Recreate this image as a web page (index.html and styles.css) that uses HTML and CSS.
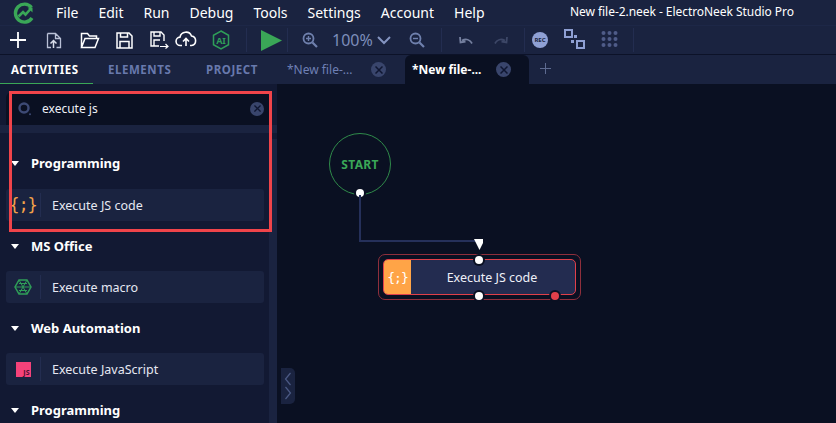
FILE: index.html
```html
<!DOCTYPE html>
<html lang="en">
<head>
<meta charset="utf-8">
<title>ElectroNeek Studio Pro</title>
<link rel="stylesheet" href="styles.css">
</head>
<body>
<header class="menubar">
  <svg class="logo" width="22" height="22" viewBox="0 0 22 22"><path d="M18.5 5.5A9 9 0 1 0 19 16" fill="none" stroke="#3aa757" stroke-width="3.4"/><path d="M5.5 14.5 10 10l2.5 2.500 5-5.500" fill="none" stroke="#3aa757" stroke-width="2.600"/><path d="M14.500 5.500h5v5z" fill="#3aa757"/></svg>
  <nav class="menu"><span>File</span><span>Edit</span><span>Run</span><span>Debug</span><span>Tools</span><span>Settings</span><span>Account</span><span>Help</span></nav>
  <div class="wintitle">New file-2.neek - ElectroNeek Studio Pro</div>
</header>
<div class="toolbar">
  <svg class="t-new" width="18" height="18" viewBox="0 0 18 18"><path d="M9 1v16M1 9h16" stroke="#fff" stroke-width="1.800"/></svg>
  <svg class="t-import" width="16" height="18" viewBox="0 0 16 18"><path d="M1.500 2.500h8l5 5v9h-4M5 16.500H1.500v-14M9.500 2.500v5h5" fill="none" stroke="#b9c0d6" stroke-width="1.300"/><path d="M7.500 17v-7M4.500 12.500l3-3 3 3" fill="none" stroke="#d9ddea" stroke-width="1.500"/></svg>
  <svg class="t-open" width="20" height="17" viewBox="0 0 20 17"><path d="M1.500 15.500v-14h6l2 2.500h7v2.500M1.500 15.500h13.500l3.500-9H5z" fill="none" stroke="#fff" stroke-width="1.500"/></svg>
  <svg class="t-save" width="17" height="17" viewBox="0 0 17 17"><path d="M1 1h12l3 3v12H1zM4.500 1v4h7V1M4 16v-6.500h9V16" fill="none" stroke="#fff" stroke-width="1.500"/></svg>
  <svg class="t-saveas" width="19" height="18" viewBox="0 0 19 18"><path d="M9 15H1V1h10l3 3v6M4 1v4h6V1M4 15V9h6" fill="none" stroke="#fff" stroke-width="1.400"/><path d="M10 15.500h8M15.500 13l2.500 2.500-2.500 2" fill="none" stroke="#fff" stroke-width="1.200"/></svg>
  <svg class="t-cloud" width="22" height="17" viewBox="0 0 22 17"><path d="M7 15.500H5.500a4.200 4.200 0 0 1-.5-8.400A6 6 0 0 1 16.500 6a4.800 4.800 0 0 1 0 9.500H15" fill="none" stroke="#fff" stroke-width="1.600"/><path d="M11 16V9M8 11.500l3-3 3 3" fill="none" stroke="#fff" stroke-width="1.600"/></svg>
  <svg class="t-ai" width="18" height="20" viewBox="0 0 18 20"><path d="M9 1l7.500 4.300v9.400L9 19l-7.500-4.300V5.300z" fill="none" stroke="#2f9e58" stroke-width="1.500"/><text x="9" y="13.500" text-anchor="middle" class="ai-text">AI</text></svg>
  <i class="sep s1"></i>
  <svg class="t-play" width="21" height="21" viewBox="0 0 21 21"><path d="M0 0l21 10.500L0 21z" fill="#3aa757"/></svg>
  <i class="sep s2"></i>
  <svg class="t-zin" width="16" height="16" viewBox="0 0 16 16"><circle cx="6.500" cy="6.500" r="5" fill="none" stroke="#6f80ad" stroke-width="1.800"/><path d="M10.500 10.500 15 15" stroke="#6f80ad" stroke-width="2.200"/><path d="M4 6.500h5M6.500 4v5" stroke="#6f80ad" stroke-width="1.400"/></svg>
  <span class="zoomval">100%</span>
  <svg class="t-chev" width="14" height="9" viewBox="0 0 14 9"><path d="M1 1l6 6 6-6" fill="none" stroke="#8494c0" stroke-width="2"/></svg>
  <svg class="t-zout" width="16" height="16" viewBox="0 0 16 16"><circle cx="6.500" cy="6.500" r="5" fill="none" stroke="#6f80ad" stroke-width="1.800"/><path d="M10.500 10.500 15 15" stroke="#6f80ad" stroke-width="2.200"/><path d="M4 6.500h5" stroke="#6f80ad" stroke-width="1.400"/></svg>
  <i class="sep s3"></i>
  <svg class="t-undo" width="14" height="8" viewBox="0 0 14 8"><path d="M13 7.500C11 3.500 7 2.500 3 4.500M1 1l.5 5.500 5-1" fill="none" stroke="#75809f" stroke-width="1.800"/></svg>
  <svg class="t-redo" width="14" height="8" viewBox="0 0 14 8"><path d="M1 7.500C3 3.500 7 2.500 11 4.500M13 1l-.5 5.500-5-1" fill="none" stroke="#3d4767" stroke-width="1.800"/></svg>
  <i class="sep s4"></i>
  <span class="rec">REC</span>
  <svg class="t-group" width="21" height="20" viewBox="0 0 21 20"><g fill="none" stroke="#8fa0d4" stroke-width="2"><rect x="1" y="1" width="7" height="7"/><rect x="13" y="12" width="7" height="7"/></g><path d="M10 6h3v3h-3zM7 11h3v3H7z" fill="#8fa0d4"/></svg>
  <svg class="t-grid" width="17" height="16" viewBox="0 0 17 16"><g fill="#4f5c88"><circle cx="2.500" cy="2" r="2"/><circle cx="8.500" cy="2" r="2"/><circle cx="14.500" cy="2" r="2"/><circle cx="2.500" cy="8" r="2"/><circle cx="8.500" cy="8" r="2"/><circle cx="14.500" cy="8" r="2"/><circle cx="2.500" cy="14" r="2"/><circle cx="8.500" cy="14" r="2"/><circle cx="14.500" cy="14" r="2"/></g></svg>
  <i class="sep s5"></i>
</div>
<div class="tabbar">
  <div class="sidetabs"><span class="stab active">ACTIVITIES</span><span class="stab">ELEMENTS</span><span class="stab">PROJECT</span></div>
  <div class="ftab"><span>*New file-...</span><b class="xbtn"><svg width="8" height="8" viewBox="0 0 8 8"><path d="M.5.5l7 7M7.500.5l-7 7" stroke="#0f1631" stroke-width="1.500"/></svg></b></div>
  <div class="ftab current"><span>*New file-...</span><b class="xbtn"><svg width="8" height="8" viewBox="0 0 8 8"><path d="M.5.5l7 7M7.500.5l-7 7" stroke="#0f1631" stroke-width="1.500"/></svg></b></div>
  <svg class="plus" width="11" height="11" viewBox="0 0 11 11"><path d="M5.500 0v11M0 5.500h11" stroke="#5d6a90" stroke-width="1"/></svg>
</div>
<main class="workspace">
  <aside class="sidebar">
    <div class="search">
      <svg width="14" height="14" viewBox="0 0 14 14"><circle cx="6" cy="6" r="4.500" fill="none" stroke="#3d4a75" stroke-width="2.400"/><circle cx="12" cy="12.200" r="1" fill="#3d4a75"/></svg>
      <span class="query">execute js</span>
      <b class="xbtn small"><svg width="7" height="7" viewBox="0 0 8 8"><path d="M.5.500l7 7M7.500.500l-7 7" stroke="#0f1631" stroke-width="1.500"/></svg></b>
    </div>
    <div class="strip"></div>
    <div class="list">
      <div class="head first"><i class="caret"></i>Programming</div>
      <div class="row"><span class="ico braces">{;}</span><span class="lbl">Execute JS code</span></div>
      <div class="head"><i class="caret"></i>MS Office</div>
      <div class="row"><span class="ico"><svg width="18" height="16" viewBox="0 0 18 16"><path d="M5 1h8l4 7-4 7H5L1 8z" fill="none" stroke="#2f9e58" stroke-width="1.500"/><path d="M5 1l4 7-4 7M13 1 9 8l4 7M1 8h16M5 4.500h8M5 11.500h8" fill="none" stroke="#2f9e58" stroke-width="1"/></svg></span><span class="lbl">Execute macro</span></div>
      <div class="head"><i class="caret"></i>Web Automation</div>
      <div class="row"><span class="ico"><span class="jsbadge">JS</span></span><span class="lbl">Execute JavaScript</span></div>
      <div class="head"><i class="caret"></i>Programming</div>
    </div>
    <div class="scrolltrack"></div>
    <div class="highlight"></div>
  </aside>
  <section class="canvas">
    <button class="collapse"><svg width="8" height="28" viewBox="0 0 8 28"><path d="M6.500 1 1.500 7l5 6M1.500 15l5 6-5 6" fill="none" stroke="#4c5a85" stroke-width="1.200"/></svg></button>
    <div class="start">START</div>
    <i class="dot start-dot"></i>
    <svg class="wire" width="124" height="55" viewBox="0 0 124 55"><path d="M1 0v46h121" fill="none" stroke="#25305a" stroke-width="2"/><path d="M115 44h11l-5.500 11z" fill="#fff"/></svg>
    <div class="node-outer">
      <div class="node">
        <span class="node-ico">{;}</span>
        <span class="node-lbl">Execute JS code</span>
      </div>
      <i class="port p-top"></i><i class="port p-bot"></i><i class="port p-err"></i>
    </div>
  </section>
</main>
</body>
</html>
```
FILE: styles.css
```css
* { box-sizing: border-box; }
html, body { margin: 0; height: 100%; overflow: hidden; }
body { width: 836px; height: 423px; background: #0a1022; color: #fff; font-family: "Noto Sans", sans-serif; display: flex; flex-direction: column; }

.menubar { height: 25px; background: #1a2340; display: flex; align-items: center; position: relative; flex: none; }
.logo { margin-left: 13px; }
.menu { display: flex; margin-left: 21px; font-size: 14px; line-height: 25px; color: #fff; }
.menu span { margin-right: 20px; }
.menu span:nth-child(2) { margin-right: 20px; }
.wintitle { position: absolute; left: 570px; top: 3px; font-size: 12px; line-height: 17px; letter-spacing: -0.05px; }

.toolbar { height: 30px; background: #1a2340; border-bottom: 1px solid #0c1228; border-top: 1px solid #1d2747; display: flex; align-items: center; flex: none; }
.toolbar svg { flex: none; }
.t-new { margin-left: 9px; }
.t-import { margin-left: 19px; }
.t-open { margin-left: 18px; }
.t-save { margin-left: 16px; }
.t-saveas { margin-left: 17px; }
.t-cloud { margin-left: 6px; margin-top: -3px; }
.t-ai { margin-left: 15px; }
.ai-text { font: 700 9px "Noto Sans", sans-serif; fill: #2f9e58; }
.sep { display: block; width: 1px; height: 24px; background: #232d50; flex: none; }
.s1 { margin-left: 16px; }
.t-play { margin-left: 14px; }
.s2 { margin-left: 5px; }
.t-zin { margin-left: 14px; }
.zoomval { margin-left: 14px; font-size: 16px; color: #7d8dba; line-height: 20px; width: 45px; }
.t-chev { margin-left: 0; }
.t-zout { margin-left: 18px; }
.s3 { margin-left: 16px; }
.t-undo { margin-left: 17px; }
.t-redo { margin-left: 21px; }
.s4 { margin-left: 16px; }
.rec { margin-left: 7px; width: 16px; height: 16px; border-radius: 50%; background: #8fa0d4; color: #1a2340; font-size: 6px; font-weight: 700; line-height: 16px; text-align: center; flex: none; }
.t-group { margin-left: 16px; margin-top: -3px; }
.t-grid { margin-left: 16px; margin-top: -3px; }
.s5 { margin-left: 15px; }

.tabbar { height: 29px; background: #1a2340; display: flex; align-items: stretch; flex: none; }
.sidetabs { width: 280px; display: flex; flex: none; }
.stab { font-size: 11.500px; font-weight: 700; letter-spacing: .55px; line-height: 30px; color: #6879ad; }
.stab:nth-child(1) { width: 93px; padding-left: 11px; color: #fff; border-bottom: 1px solid #3aa757; }
.stab:nth-child(2) { width: 98px; padding-left: 15px; }
.stab:nth-child(3) { padding-left: 15px; }
.ftab { width: 124px; display: flex; align-items: center; font-size: 12px; color: #6f80b5; padding-left: 7px; position: relative; }
.ftab span { width: 84px; white-space: nowrap; }
.ftab.current { width: 124px; margin-left: 1px; background: #0a1022; border-radius: 6px 6px 0 0; color: #fff; font-weight: 700; }
.xbtn { width: 15px; height: 15px; border-radius: 50%; background: #39456c; display: flex; align-items: center; justify-content: center; flex: none; }
.xbtn.small { width: 14px; height: 14px; }
.plus { margin: 8px 0 0 11px; }

.workspace { flex: 1; display: flex; min-height: 0; }
.sidebar { width: 277px; background: #121933; position: relative; overflow: hidden; flex: none; }
.search { margin-left: 6px; height: 33px; margin-top: 8px; background: #0a1022; border-radius: 6px 6px 0 0; display: flex; align-items: center; padding-left: 12px; font-size: 12px; width: 264px; }
.query { margin-left: 10px; flex: 1; color: #eef0f8; }
.search .xbtn { margin-right: 6px; }
.strip { height: 8px; background: #1a2340; }
.list { padding: 0 0 0 6px; width: 264px; }
.head { height: 50px; display: flex; align-items: center; padding-left: 5px; font-size: 13px; font-weight: 700; color: #fff; }
.head.first { height: 56px; padding-top: 4px; margin-top: 0; }
.caret { width: 0; height: 0; border-left: 4px solid transparent; border-right: 4px solid transparent; border-top: 5px solid #fff; margin-right: 12px; }
.row { height: 32px; width: 258px; background: #1a2340; border-radius: 3px; display: flex; align-items: center; font-size: 12.500px; color: #e6e8f2; }
.ico { width: 35px; height: 24px; display: flex; align-items: center; justify-content: center; border-right: 1px solid #232d50; flex: none; }
.braces { color: #f2a24a; font: 400 17px "DejaVu Sans Mono", monospace; letter-spacing: -1px; }
.lbl { margin-left: 11px; }
.jsbadge { width: 15px; height: 15px; background: #f5427a; color: #4a1030; font-size: 7px; font-weight: 700; display: flex; align-items: flex-end; justify-content: flex-end; line-height: 8px; padding-right: 1px; }
.scrolltrack { position: absolute; left: 269px; top: 55px; bottom: 0; width: 8px; background: #1a2340; }
.highlight { position: absolute; left: 9px; top: 7px; width: 263px; height: 141px; border: 3px solid #f0444a; }

.canvas { flex: 1; position: relative; background: #0a1022; }
.collapse { position: absolute; left: 4px; top: 284px; width: 14px; height: 36px; padding: 0; border: 0; border-radius: 0 5px 5px 0; background: #1a2340; display: flex; align-items: center; justify-content: center; }
.start { position: absolute; left: 52px; top: 49px; width: 62px; height: 62px; border: 1.500px solid #2f8a4a; border-radius: 50%; color: #3aa757; font-size: 12px; font-weight: 700; letter-spacing: .3px; display: flex; align-items: center; justify-content: center; }
.dot, .port { position: absolute; width: 8px; height: 8px; border-radius: 50%; background: #fff; box-shadow: 0 0 0 2px #0a1022; }
.start-dot { left: 79px; top: 105px; }
.wire { position: absolute; left: 82px; top: 111px; }
.node-outer { position: absolute; left: 101px; top: 170px; width: 203px; height: 46px; border: 1.500px solid #8f2f3c; border-radius: 7px; padding: 4px; }
.node { height: 36px; background: #232c50; border: 1.500px solid #e0404a; border-radius: 5px; display: flex; align-items: center; overflow: hidden; }
.node-ico { width: 27px; height: 100%; background: #ffa447; color: #fff; font: 400 13px "DejaVu Sans Mono", monospace; letter-spacing: -1px; display: flex; align-items: center; justify-content: center; flex: none; }
.node-lbl { flex: 1; text-align: center; font-size: 12.500px; color: #eef0f8; padding-right: 2px; }
.p-top { left: 96px; top: 1px; }
.p-bot { left: 96px; top: 37px; }
.p-err { left: 172px; top: 37px; background: #e0404a; }
```
